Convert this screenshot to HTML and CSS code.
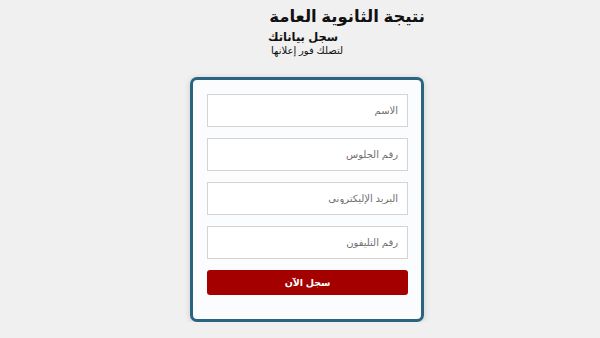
FILE: index.html
```html
<!DOCTYPE html>
<html lang="ar" dir="rtl">
<head>
<meta charset="utf-8">
<link rel="stylesheet" href="styles.css">
</head>
<body>
<header class="head">
  <h1 class="title">نتيجة الثانوية العامة</h1>
  <p class="sub">سجل بياناتك</p>
  <p class="note">لتصلك فور إعلانها</p>
</header>
<main class="wrap">
  <form class="card">
    <input class="field" type="text" placeholder="الاسم">
    <input class="field" type="text" placeholder="رقم الجلوس">
    <input class="field" type="text" placeholder="البريد الإليكتروني">
    <input class="field" type="text" placeholder="رقم التليفون">
    <button class="btn" type="button">سجل الآن</button>
  </form>
</main>
</body>
</html>
```
FILE: styles.css
```css
html, body {
  margin: 0;
  padding: 0;
  background: #f0f0f0;
  font-family: "Liberation Sans", "DejaVu Sans", sans-serif;
}
.head {
  height: 77px;
  display: flex;
  flex-direction: column;
}
.title {
  margin: 5px 175px 0 0;
  font-size: 16.5px;
  font-weight: bold;
  color: #111;
  line-height: 22px;
}
.sub {
  margin: 2px 262px 0 0;
  font-size: 11.5px;
  font-weight: bold;
  color: #111;
  line-height: 16px;
}
.note {
  margin: -1px 257px 0 0;
  font-size: 10px;
  color: #111;
  line-height: 13px;
}
.wrap {
  display: flex;
  justify-content: flex-start;
  padding-right: 176px;
}
.card {
  width: 201px;
  padding: 14px 13px 24px 14px;
  border: 3px solid #2a6480;
  border-radius: 7px;
  background: #fafcfd;
  box-shadow: 0 1px 6px rgba(0,0,0,0.15);
  display: flex;
  flex-direction: column;
  gap: 11px;
}
.field {
  box-sizing: border-box;
  width: 201px;
  height: 33px;
  margin: 0;
  padding: 0 9px;
  border: 1px solid #d4d4d4;
  background: #fff;
  font-family: inherit;
  font-size: 10px;
  color: #333;
  direction: rtl;
}
.field::placeholder {
  color: #707070;
}
.btn {
  height: 25px;
  margin: 0;
  border: 0;
  border-radius: 3px;
  background: #a50000;
  color: #fff;
  font-family: inherit;
  font-weight: bold;
  font-size: 9.5px;
}
```
